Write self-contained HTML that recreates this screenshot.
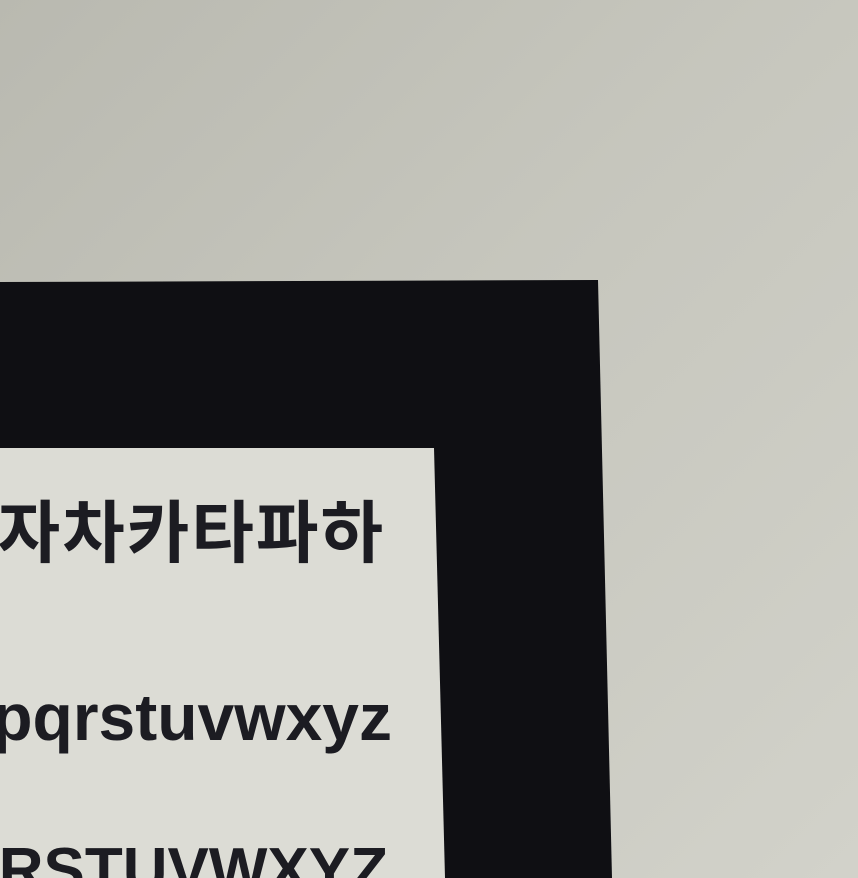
<!DOCTYPE html>
<html>
<head>
<meta charset="utf-8">
<style>
html,body{margin:0;padding:0;width:858px;height:878px;overflow:hidden;}
body{position:relative;
background:linear-gradient(135deg,#b9b9b0 0%,#c6c6bd 45%,#d2d2ca 100%);
font-family:"Liberation Sans","Noto Sans CJK KR","NanumGothic",sans-serif;}
svg{position:absolute;left:0;top:0;}
.clip{position:absolute;left:0;top:0;width:440px;height:878px;overflow:hidden;}
.t{position:absolute;font-weight:bold;color:#1c1c22;white-space:nowrap;text-align:right;line-height:1;}
</style>
</head>
<body>
<svg width="858" height="878">
  <polygon points="0,282 598,280 612,878 0,878" fill="#0f0f13"/>
  <polygon points="0,448 434,448 445,878 0,878" fill="#dcdcd5"/>
</svg>
<div class="clip">
<div class="t" style="right:55px;top:500px;font-size:68px;letter-spacing:2px;">아자차카타파하</div>
<div class="t" style="right:48px;top:684px;font-size:66px;">opqrstuvwxyz</div>
<div class="t" style="right:52px;top:840px;font-size:62px;">NOPQRSTUVWXYZ</div>
</div>
</body>
</html>
